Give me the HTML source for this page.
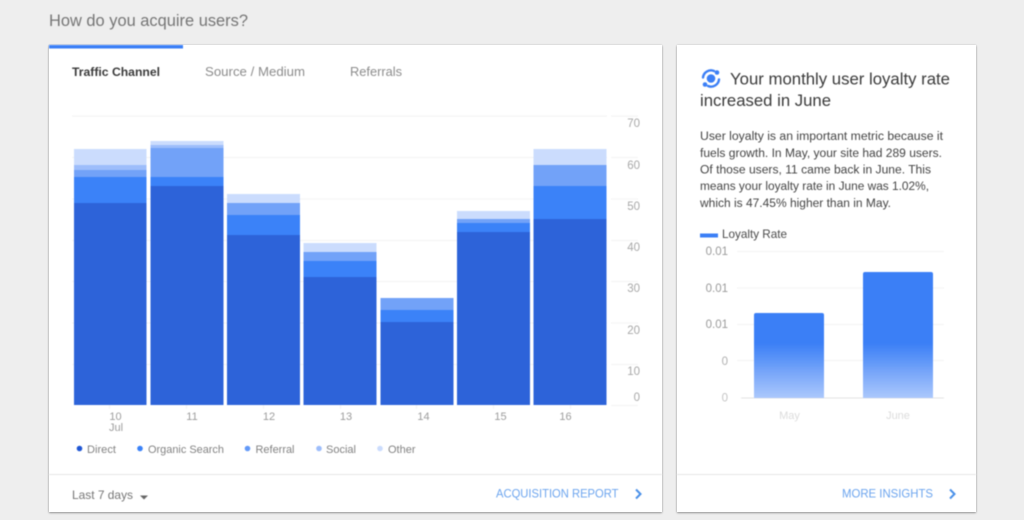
<!DOCTYPE html>
<html><head><meta charset="utf-8">
<style>
html,body{margin:0;padding:0;width:1024px;height:520px;overflow:hidden;background:#eeeeee}
svg{display:block;position:absolute;left:0;top:0}
text{font-family:"Liberation Sans",sans-serif}
.card{position:absolute;background:#fff;box-shadow:0 1px 2px rgba(0,0,0,.35),0 0 2px rgba(0,0,0,.12)}
</style></head>
<body>
<div class="card" style="left:49px;top:45px;width:613px;height:467px"></div>
<div class="card" style="left:677px;top:45px;width:299px;height:467px"></div>
<svg width="1024" height="520" viewBox="0 0 1024 520" style="filter:blur(.4px)">
<defs>
<linearGradient id="g" gradientUnits="userSpaceOnUse" x1="0" y1="343" x2="0" y2="398">
<stop offset="0" stop-color="#3b7ff6"/><stop offset="1" stop-color="#acc8fc"/>
</linearGradient>
</defs>
<text x="49" y="26" font-size="16.5" fill="#757575" textLength="199" lengthAdjust="spacingAndGlyphs">How do you acquire users?</text>
<rect x="49" y="45" width="134" height="3.5" fill="#3b7ff6"/>
<text x="72" y="76" font-size="12" font-weight="bold" fill="#3a3a3a" textLength="88" lengthAdjust="spacingAndGlyphs">Traffic Channel</text>
<text x="205" y="76" font-size="12.5" fill="#8c8c8c" textLength="100" lengthAdjust="spacingAndGlyphs">Source / Medium</text>
<text x="350" y="76" font-size="12.5" fill="#8c8c8c" textLength="52" lengthAdjust="spacingAndGlyphs">Referrals</text>

<g fill="#f3f3f3">
<rect x="72" y="115.500" width="535" height="1.200"/><rect x="72" y="157" width="535" height="1"/><rect x="72" y="198.500" width="535" height="1"/><rect x="72" y="240" width="535" height="1"/><rect x="72" y="281" width="535" height="1"/><rect x="72" y="322.500" width="535" height="1"/><rect x="72" y="364" width="535" height="1"/>
<rect x="611" y="115.500" width="27" height="1.200"/><rect x="611" y="157" width="27" height="1"/><rect x="611" y="198.500" width="27" height="1"/><rect x="611" y="240" width="27" height="1"/><rect x="611" y="281" width="27" height="1"/><rect x="611" y="322.500" width="27" height="1"/><rect x="611" y="364" width="27" height="1"/><rect x="611" y="405" width="27" height="1"/>
<rect x="109" y="405" width="1" height="4"/><rect x="186" y="405" width="1" height="4"/><rect x="263" y="405" width="1" height="4"/><rect x="340" y="405" width="1" height="4"/><rect x="416" y="405" width="1" height="4"/><rect x="493" y="405" width="1" height="4"/><rect x="570" y="405" width="1" height="4"/>
</g>

<g fill="#2d63d9">
<rect x="74" y="203" width="72.500" height="202"/><rect x="150.500" y="186" width="73" height="219"/><rect x="227" y="235" width="73" height="170"/><rect x="303.500" y="277" width="73" height="128"/><rect x="380.500" y="322" width="73" height="83"/><rect x="457" y="232" width="73" height="173"/><rect x="533.500" y="219" width="73" height="186"/>
</g>
<g fill="#3b82f8">
<rect x="74" y="177" width="72.500" height="26"/><rect x="150.500" y="177" width="73" height="9"/><rect x="227" y="215" width="73" height="20"/><rect x="303.500" y="261" width="73" height="16"/><rect x="380.500" y="310" width="73" height="12"/><rect x="457" y="223" width="73" height="9"/><rect x="533.500" y="186" width="73" height="33"/>
</g>
<g fill="#72a2f8">
<rect x="74" y="170" width="72.500" height="7"/><rect x="150.500" y="148" width="73" height="29"/><rect x="227" y="203" width="73" height="12"/><rect x="303.500" y="252" width="73" height="9"/><rect x="380.500" y="298" width="73" height="12"/><rect x="457" y="219" width="73" height="4"/><rect x="533.500" y="165" width="73" height="21"/>
</g>
<g fill="#9dbdfb">
<rect x="74" y="165" width="72.500" height="5"/><rect x="150.500" y="145" width="73" height="3"/>
</g>
<g fill="#cbdcfd">
<rect x="74" y="149" width="72.500" height="16"/><rect x="150.500" y="141" width="73" height="4"/><rect x="227" y="194" width="73" height="9"/><rect x="303.500" y="243" width="73" height="9"/><rect x="457" y="211" width="73" height="8"/><rect x="533.500" y="149" width="73" height="16"/>
</g>

<g font-size="11.500" fill="#a8a8a8" text-anchor="end">
<text x="640" y="127">70</text><text x="640" y="169">60</text><text x="640" y="210">50</text><text x="640" y="251">40</text><text x="640" y="292">30</text><text x="640" y="334">20</text><text x="640" y="375">10</text><text x="640" y="401">0</text>
</g>
<g font-size="11" fill="#9c9c9c" text-anchor="middle">
<text x="115.500" y="420">10</text><text x="116" y="431">Jul</text><text x="192" y="420">11</text><text x="269" y="420">12</text><text x="346" y="420">13</text><text x="423.500" y="420">14</text><text x="500.500" y="420">15</text><text x="565.500" y="420">16</text>
</g>

<circle cx="79.500" cy="448.500" r="2.800" fill="#1f56d4"/>
<circle cx="140" cy="448.500" r="2.800" fill="#3b82f8"/>
<circle cx="247.500" cy="448.500" r="2.800" fill="#6299f8"/>
<circle cx="319" cy="448.500" r="2.800" fill="#9dbdfb"/>
<circle cx="380" cy="448.500" r="2.800" fill="#cbdcfd"/>
<g font-size="11" fill="#828282">
<text x="87" y="453" textLength="29" lengthAdjust="spacingAndGlyphs">Direct</text>
<text x="148" y="453" textLength="76" lengthAdjust="spacingAndGlyphs">Organic Search</text>
<text x="255.500" y="453" textLength="39" lengthAdjust="spacingAndGlyphs">Referral</text>
<text x="326" y="453" textLength="30" lengthAdjust="spacingAndGlyphs">Social</text>
<text x="388" y="453" textLength="27.500" lengthAdjust="spacingAndGlyphs">Other</text>
</g>

<rect x="49" y="474" width="613" height="1" fill="#e6e6e6"/>
<rect x="677" y="474" width="299" height="1" fill="#e6e6e6"/>
<text x="72" y="499" font-size="12" fill="#757575" textLength="61" lengthAdjust="spacingAndGlyphs">Last 7 days</text>
<path d="M140 495.500h8l-4 4z" fill="#666"/>
<text x="496" y="497.500" font-size="12" fill="#6ba4ee" textLength="122.500" lengthAdjust="spacingAndGlyphs">ACQUISITION REPORT</text>
<path d="M636 489.500l4.500 4.500-4.500 4.500" fill="none" stroke="#4a90e8" stroke-width="2"/>

<circle cx="711" cy="78.500" r="4.300" fill="#3b7ff6"/>
<g fill="none" stroke="#3b7ff6" stroke-width="2.400" stroke-linecap="round">
<path d="M703 77.500A8 8 0 0 1 714 71"/>
<path d="M719 79.500A8 8 0 0 1 708 86"/>
</g>
<circle cx="717" cy="72.500" r="2.300" fill="#3b7ff6"/>
<circle cx="705" cy="84.500" r="2.300" fill="#3b7ff6"/>

<text x="730" y="84.500" font-size="16.500" fill="#3a3a3a" textLength="220" lengthAdjust="spacingAndGlyphs">Your monthly user loyalty rate</text>
<text x="700" y="106" font-size="16.500" fill="#3a3a3a" textLength="131" lengthAdjust="spacingAndGlyphs">increased in June</text>
<g font-size="11.500" fill="#444">
<text x="700" y="140" textLength="243" lengthAdjust="spacingAndGlyphs">User loyalty is an important metric because it</text>
<text x="700" y="157" textLength="242" lengthAdjust="spacingAndGlyphs">fuels growth. In May, your site had 289 users.</text>
<text x="700" y="173.500" textLength="231" lengthAdjust="spacingAndGlyphs">Of those users, 11 came back in June. This</text>
<text x="700" y="190" textLength="229" lengthAdjust="spacingAndGlyphs">means your loyalty rate in June was 1.02%,</text>
<text x="700" y="207" textLength="191" lengthAdjust="spacingAndGlyphs">which is 47.45% higher than in May.</text>
</g>
<rect x="700" y="233.500" width="18" height="4" fill="#3b7ff6"/>
<text x="722" y="238" font-size="12" fill="#4a4a4a" textLength="65" lengthAdjust="spacingAndGlyphs">Loyalty Rate</text>

<g fill="#f3f3f3">
<rect x="737" y="251" width="207" height="1"/><rect x="737" y="287.500" width="207" height="1"/><rect x="737" y="324" width="207" height="1"/><rect x="737" y="360" width="207" height="1"/>
</g>
<rect x="741" y="397.500" width="203" height="1" fill="#e4e4e4"/>
<path d="M754 398V315a2 2 0 0 1 2-2h66a2 2 0 0 1 2 2V398z" fill="url(#g)"/>
<path d="M863 398V274a2 2 0 0 1 2-2h66a2 2 0 0 1 2 2V398z" fill="url(#g)"/>
<g font-size="11.500" text-anchor="end">
<text x="728" y="255" fill="#9a9a9a">0.01</text><text x="728" y="292" fill="#9a9a9a">0.01</text><text x="728" y="328" fill="#9a9a9a">0.01</text><text x="728" y="365" fill="#b0b0b0">0</text><text x="728" y="401.500" fill="#c4c4c4">0</text>
</g>
<text x="789.500" y="419" font-size="11" fill="#dcdcdc" text-anchor="middle">May</text>
<text x="898" y="419" font-size="11" fill="#dcdcdc" text-anchor="middle">June</text>
<text x="842" y="497.500" font-size="12" fill="#6ba4ee" textLength="91" lengthAdjust="spacingAndGlyphs">MORE INSIGHTS</text>
<path d="M950 489.500l4.500 4.500-4.500 4.500" fill="none" stroke="#4a90e8" stroke-width="2"/>
</svg>
</body></html>
